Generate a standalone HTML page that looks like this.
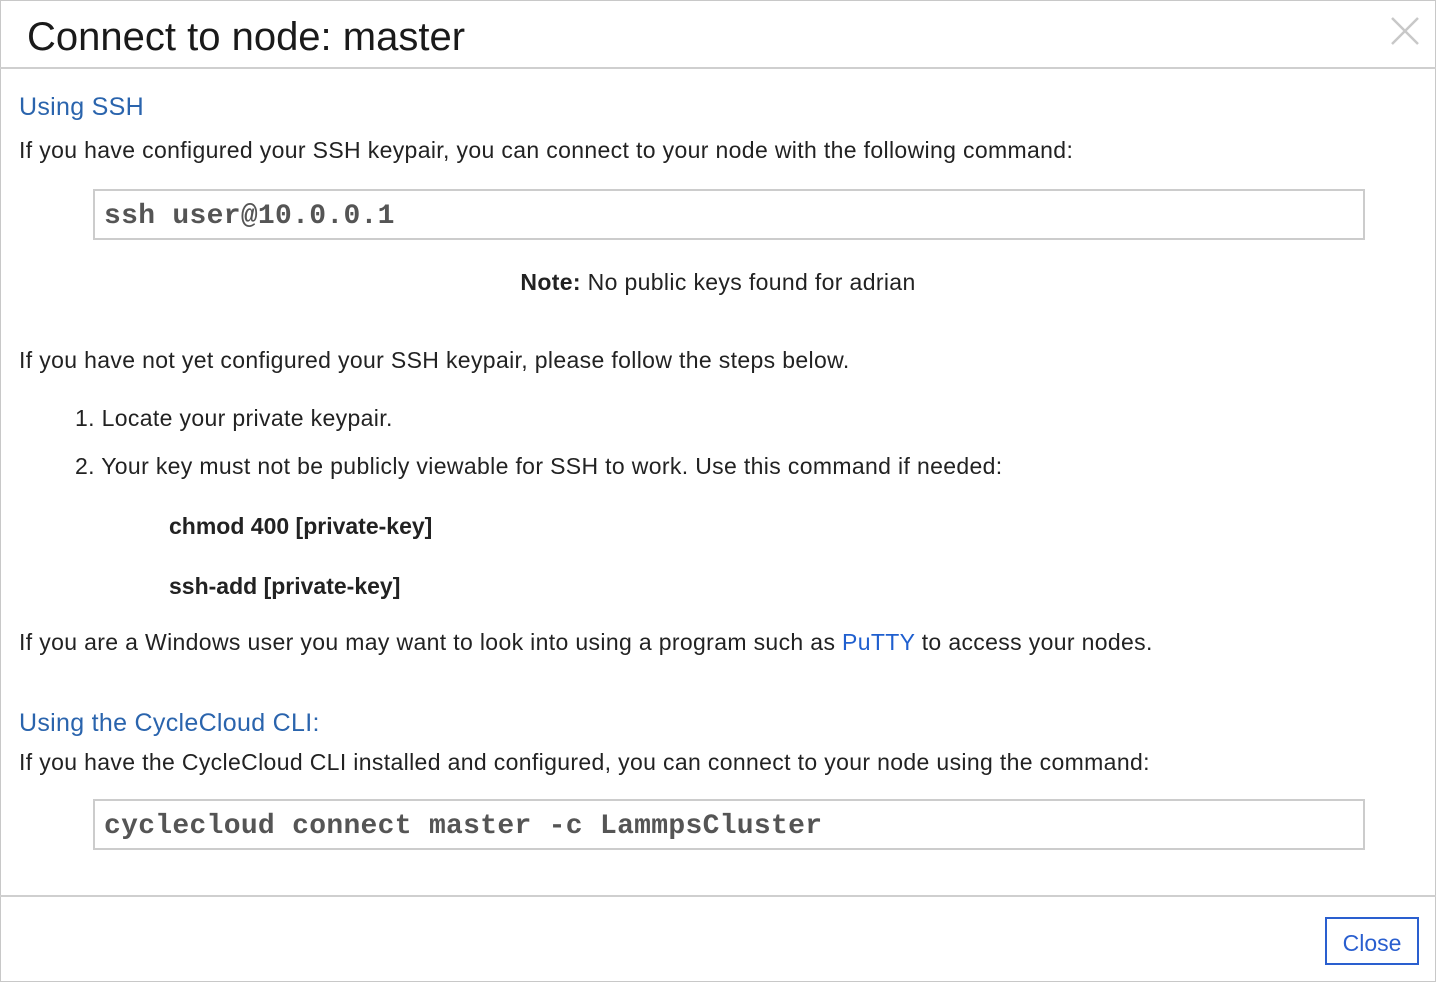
<!DOCTYPE html>
<html><head><meta charset="utf-8"><style>
html,body{margin:0;padding:0;width:1436px;height:982px;overflow:hidden;background:#fff}
body{font-family:"Liberation Sans",sans-serif;color:#222;position:relative}
.frame{position:absolute;left:0;top:0;width:1434px;height:980px;border:1px solid #c8c8c8}
.t{position:absolute;white-space:nowrap;line-height:30px;font-size:23px;height:30px;letter-spacing:0.35px}
.h{color:#2a64ad;font-size:25px;letter-spacing:0.3px}
.code{position:absolute;left:93px;width:1259px;height:47px;border:2px solid #ccc;font-family:"Liberation Mono",monospace;font-weight:bold;font-size:28px;color:#555;line-height:51px;padding-left:9px;box-sizing:content-box;letter-spacing:0.3px}
.line{position:absolute;left:0;width:1436px;height:2px;background:#cfcfcf}
a{color:#1f5fcf;text-decoration:none}
</style></head><body>
<div class="frame"></div>
<div class="t" style="left:27px;top:15px;font-size:40px;line-height:44px;height:44px;color:#1a1a1a;letter-spacing:0">Connect to node: master</div>
<svg style="position:absolute;left:1390px;top:16px" width="30" height="30"><path d="M2 2L28 28M28 2L2 28" stroke="#c8c8c8" stroke-width="2.5"/></svg>
<div class="line" style="top:67px"></div>
<div class="t h" style="left:19px;top:92px">Using SSH</div>
<div class="t" style="left:19px;top:135px">If you have configured your SSH keypair, you can connect to your node with the following command:</div>
<div class="code" style="top:189px">ssh user@10.0.0.1</div>
<div class="t" style="left:0;width:1436px;text-align:center;top:267px"><b>Note:</b> No public keys found for adrian</div>
<div class="t" style="left:19px;top:345px">If you have not yet configured your SSH keypair, please follow the steps below.</div>
<div class="t" style="left:75px;top:403px">1. Locate your private keypair.</div>
<div class="t" style="left:75px;top:451px">2. Your key must not be publicly viewable for SSH to work. Use this command if needed:</div>
<div class="t" style="left:169px;top:511px;font-weight:bold;letter-spacing:0">chmod 400 [private-key]</div>
<div class="t" style="left:169px;top:571px;font-weight:bold;letter-spacing:0">ssh-add [private-key]</div>
<div class="t" style="left:19px;top:627px">If you are a Windows user you may want to look into using a program such as <a>PuTTY</a> to access your nodes.</div>
<div class="t h" style="left:19px;top:708px">Using the CycleCloud CLI:</div>
<div class="t" style="left:19px;top:747px">If you have the CycleCloud CLI installed and configured, you can connect to your node using the command:</div>
<div class="code" style="top:799px">cyclecloud connect master -c LammpsCluster</div>
<div class="line" style="top:895px"></div>
<div style="position:absolute;left:1325px;top:917px;width:90px;height:44px;border:2px solid #2a5fcf;color:#2a5fcf;font-size:23px;line-height:48px;text-align:center">Close</div>
</body></html>
